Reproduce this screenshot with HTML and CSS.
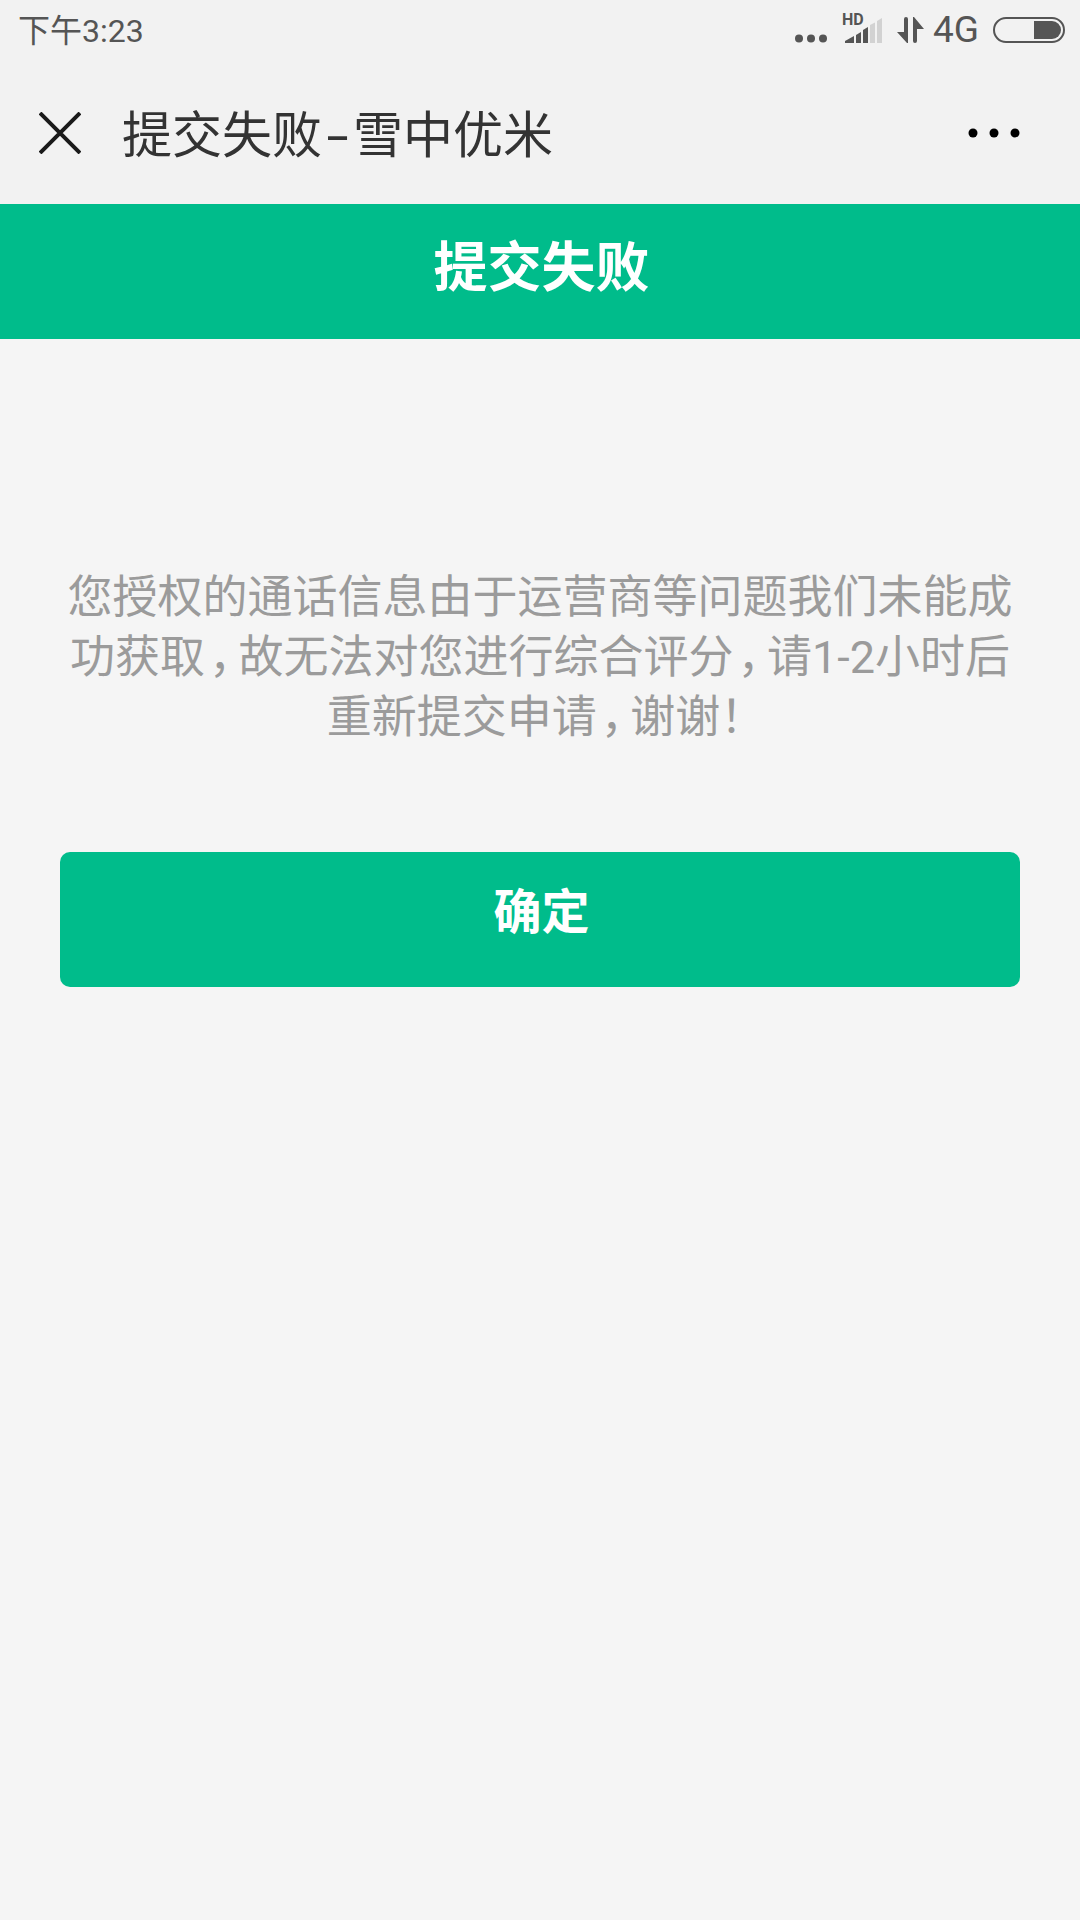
FILE: index.html
```html
<!DOCTYPE html>
<html lang="zh-CN">
<head>
    <meta charset="UTF-8">
    <meta name="viewport" content="width=device-width, initial-scale=1.0">
    <title>提交失败-雪中优米</title>
    <link rel="stylesheet" href="styles.css">
</head>
<body>
    <div class="top-bar">
        <div class="status-bar">
            <span class="time">下午3:23</span>
            <div class="status-icons">
                <svg class="dots-small" width="32" height="9" viewBox="0 0 32 9">
                    <circle cx="4" cy="4.5" r="4" fill="#555"/>
                    <circle cx="16" cy="4.5" r="4" fill="#555"/>
                    <circle cx="28" cy="4.5" r="4" fill="#555"/>
                </svg>
                <div class="signal">
                    <span class="hd">HD</span>
                    <svg width="37" height="25" viewBox="0 0 37 25">
                        <path d="M0 25 V23 L9 18 V25 Z" fill="#555"/>
                        <path d="M11 17 L16 14 V25 H11 Z" fill="#555"/>
                        <path d="M18 12 L23 9 V25 H18 Z" fill="#555"/>
                        <path d="M25 7 L30 4.500 V25 H25 Z" fill="#d2d2d2"/>
                        <path d="M32 3 L37 0 V25 H32 Z" fill="#d2d2d2"/>
                    </svg>
                </div>
                <svg class="arrows" width="27" height="26" viewBox="0 0 27 26">
                    <path d="M7 2 Q7 0 9 0 Q11 0 11 2 V26 H10 L0 15 H7 Z" fill="#555"/>
                    <path d="M16 0 H17 L27 12 H20 V24 Q20 26 18 26 Q16 26 16 24 Z" fill="#555"/>
                </svg>
                <span class="net">4G</span>
                <div class="battery"><div class="battery-level"></div></div>
            </div>
        </div>
        <div class="nav-bar">
            <svg class="close" width="42" height="42" viewBox="0 0 42 42">
                <path d="M1 1 L41 41 M41 1 L1 41" stroke="#1a1a1a" stroke-width="4" fill="none"/>
            </svg>
            <span class="nav-title">提交失败<span class="dash">-</span>雪中优米</span>
            <svg class="more" width="52" height="10" viewBox="0 0 52 10">
                <circle cx="5" cy="5" r="4.5" fill="#000"/>
                <circle cx="26" cy="5" r="4.5" fill="#000"/>
                <circle cx="47" cy="5" r="4.5" fill="#000"/>
            </svg>
        </div>
    </div>

    <div class="page-header">提交失败</div>

    <div class="content">
        <div class="message">
            <div class="line">您授权的通话信息由于运营商等问题我们未能成</div>
            <div class="line">功获取<span class="comma">，</span>故无法对您进行综合评分<span class="comma">，</span>请1-2小时后</div>
            <div class="line">重新提交申请<span class="comma">，</span>谢谢<span class="bang">！</span></div>
        </div>
        <div class="confirm-btn">确定</div>
    </div>
</body>
</html>
```

FILE: styles.css
```css
body {
    margin: 0;
    width: 1080px;
    height: 1920px;
    overflow: hidden;
    background-color: #f5f5f5;
    font-family: Roboto, "Noto Sans CJK SC", sans-serif;
}

.top-bar {
    height: 204px;
    background-color: #f2f2f2;
}

.status-bar {
    height: 43px;
    padding: 0 15px 19px 18px;
    display: flex;
    align-items: flex-end;
    justify-content: space-between;
    color: #555;
}

.time {
    font-size: 32px;
    line-height: 32px;
    margin-bottom: -4px;
}

.status-icons {
    display: flex;
    align-items: flex-end;
}

.status-icons svg {
    display: block;
}

.dots-small {
    margin-right: 18px;
}

.signal {
    position: relative;
    width: 37px;
    height: 25px;
    margin-right: 15px;
}

.hd {
    position: absolute;
    left: -3px;
    top: -4px;
    font-size: 16px;
    line-height: 12px;
    font-weight: 700;
    color: #555;
}

.arrows {
    margin-right: 9px;
}

.net {
    font-size: 37px;
    line-height: 26px;
    margin-right: 14px;
}

.battery {
    width: 72px;
    height: 26px;
    border: 2px solid #555;
    border-radius: 13px;
    box-sizing: border-box;
    padding: 2px;
    display: flex;
    justify-content: flex-end;
}

.battery-level {
    width: 27px;
    background-color: #555;
    border-radius: 0 9px 9px 0;
}

.nav-bar {
    height: 142px;
    padding: 0 60px 0 39px;
    display: flex;
    align-items: center;
}

.close {
    margin-right: 41px;
}

.nav-title {
    flex: 1;
    font-size: 50px;
    color: #333;
    margin-bottom: 4px;
}

.dash {
    display: inline-block;
    width: 31px;
    text-align: center;
    transform: scaleX(1.6);
}

.page-header {
    height: 135px;
    padding-left: 3px;
    background-color: #00bc8b;
    color: #fff;
    font-size: 54px;
    font-weight: 700;
    line-height: 129px;
    text-align: center;
}

.content {
    padding: 0 60px;
}

.message {
    margin: 229px -6px 0;
    font-size: 45px;
    line-height: 60px;
    color: #9b9b9b;
    text-align: center;
}

.line {
    height: 60px;
    white-space: nowrap;
}

.comma {
    font-feature-settings: "palt";
    margin: 0 4px 0 7px;
}

.bang {
    margin-right: -12px;
}

.confirm-btn {
    margin-top: 104px;
    height: 135px;
    padding-left: 3px;
    border-radius: 10px;
    background-color: #00bc8b;
    color: #fff;
    font-size: 48px;
    font-weight: 700;
    line-height: 121px;
    text-align: center;
}
```
